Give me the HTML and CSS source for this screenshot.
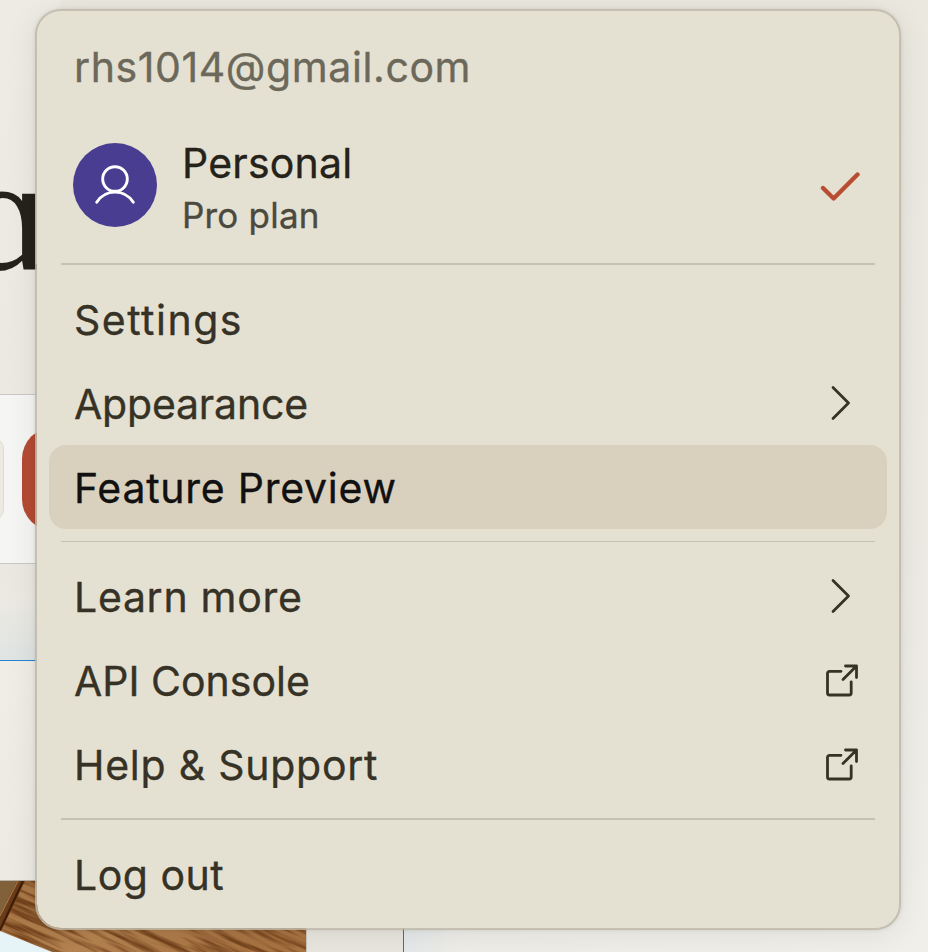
FILE: index.html
```html
<!DOCTYPE html>
<html lang="en">
<head>
<meta charset="utf-8">
<title>Account menu</title>
<link rel="stylesheet" href="styles.css">
</head>
<body>
<div class="page">
  <div class="backdrop" aria-hidden="true">
    <div class="hero"><span class="hero-letter">ɑ</span></div>
    <div class="composer"><span class="pill"></span><span class="send"></span></div>
    <div class="glow"></div>
    <div class="rest"></div>
    <div class="bottom">
      <svg class="photo" viewBox="0 0 306 71" preserveAspectRatio="none">
        <defs>
          <linearGradient id="wood" x1="0" x2="1" y2="0.3"><stop offset="0" stop-color="#a87545"/><stop offset=".5" stop-color="#b58350"/><stop offset="1" stop-color="#a87342"/></linearGradient>
          <filter id="grain" x="0" y="0" width="100%" height="100%" color-interpolation-filters="sRGB"><feTurbulence type="fractalNoise" baseFrequency=".014 .2" numOctaves="3" seed="7"/><feColorMatrix values="0 0 0 0 .45  0 0 0 0 .26  0 0 0 0 .11  3.4 0 0 0 -1.4"/></filter>
          <clipPath id="frame"><rect width="306" height="71"/></clipPath>
        </defs>
        <g clip-path="url(#frame)">
          <rect width="306" height="71" fill="url(#wood)"/>
          <g transform="rotate(24)"><rect x="-60" y="-160" width="460" height="360" filter="url(#grain)"/></g>
          <path d="M0 0H17L0 36Z" fill="#80613a"/>
          <path d="M17 0H25L0 52V34Z" fill="#6b3c18"/>
          <path d="M23 0L0 49" stroke="#3d1c08" stroke-width="2"/>
          <path d="M18 0L0 35" stroke="#b28350" stroke-width="1"/>
          <path d="M0 50L52 71H0Z" fill="#e6f3f7"/>
        </g>
      </svg>
      <div class="gap"></div>
      <div class="panel"></div>
    </div>
  </div>

  <div class="menu" role="menu">
    <div class="email"><span class="t-email">rhs1014@gmail.com</span></div>
    <div class="profile">
      <span class="avatar"><svg viewBox="0 0 84 84"><circle cx="42" cy="36" r="12.300"/><path d="M23.700 59.300A21.500 21.500 0 0 1 60.300 59.300"/></svg></span>
      <span class="who"><span class="name">Personal</span><span class="plan">Pro plan</span></span>
      <svg class="check" viewBox="0 0 40 32"><path d="M3 17L13.600 27.500L37.500 3.500"/></svg>
    </div>
    <div class="sep"></div>
    <div class="item"><span class="t-settings">Settings</span></div>
    <div class="item"><span class="t-appearance">Appearance</span><svg class="chev" viewBox="0 0 20 36"><path d="M2 2.500L17.500 18L2 33.500"/></svg></div>
    <div class="item active"><span class="t-feature">Feature Preview</span></div>
    <div class="sep thin"></div>
    <div class="item"><span class="t-learn">Learn more</span><svg class="chev" viewBox="0 0 20 36"><path d="M2 2.500L17.500 18L2 33.500"/></svg></div>
    <div class="item"><span class="t-api">API Console</span><svg class="ext" viewBox="0 0 34 34"><path d="M16 8.300H4.500A2 2 0 0 0 2.500 10.300V30A2 2 0 0 0 4.500 32H24.200A2 2 0 0 0 26.200 30V18.800M18 16.500L31.500 3M20.500 3H31.500V14.500"/></svg></div>
    <div class="item"><span class="t-help">Help &amp; Support</span><svg class="ext" viewBox="0 0 34 34"><path d="M16 8.300H4.500A2 2 0 0 0 2.500 10.300V30A2 2 0 0 0 4.500 32H24.200A2 2 0 0 0 26.200 30V18.800M18 16.500L31.500 3M20.500 3H31.500V14.500"/></svg></div>
    <div class="sep"></div>
    <div class="item"><span class="t-logout">Log out</span></div>
  </div>
</div>
</body>
</html>
```
FILE: styles.css
```css
* { box-sizing: border-box; }
body { margin: 0; font-family: Inter, sans-serif; }
.page { position: relative; width: 928px; height: 952px; overflow: hidden; background: linear-gradient(#ebe8e0, #edeae4 55%, #f0efea); }

.backdrop { position: absolute; inset: 0; display: flex; flex-direction: column; }
.hero { height: 394px; width: 60px; overflow: hidden; background: linear-gradient(#eeebe5, #ece9e2); }
.hero-letter { display: block; margin: 127px 0 0 -36px; font: 166px/172px "Liberation Serif", serif; color: #25221b; }
.composer { width: 60px; height: 170px; display: flex; align-items: center; gap: 18px; background: #f5f5f3; border: solid #c9c8c4; border-width: 1px 0; overflow: hidden; }
.pill { flex: none; width: 24px; height: 84px; margin-left: -20px; border: 1px solid #dedbd2; border-radius: 20px; background: #edeae2; }
.send { flex: none; width: 100px; height: 104px; border-radius: 32px; background: #b44b33; }
.glow { width: 60px; height: 97px; background: linear-gradient(#ebe8e1, #ebe9e2 40%, #dfe4e3); border-bottom: 1px solid #2484d4; }
.rest { width: 60px; height: 219px; background: linear-gradient(#f0ece6, #eceae3); }
.bottom { display: flex; height: 72px; }
.photo { width: 306px; height: 72px; border-top: 1px solid #b5b2a9; }
.gap { width: 98px; background: #e9e6df; border-left: 1px solid #c7c4bb; border-right: 1px solid #2b78b8; }
.panel { width: 524px; background: linear-gradient(90deg, #e3e8e9, #eeede8 10%, #f0efea); }

.menu { position: relative; width: 866px; height: 921px; margin: 9px 0 0 35px; padding: 12px; border: 2px solid rgba(190,185,168,.85); border-radius: 26px; background: #e5e1d2; background-clip: padding-box; box-shadow: 0 4px 32px rgba(0,0,0,.08), 0 0 4px rgba(0,0,0,.1); color: #363226; font-size: 41px; white-space: nowrap; -webkit-text-stroke: .35px currentColor; }
.email { height: 96px; padding: 3px 25px 0; line-height: 83px; color: #6c685a; }
.profile { height: 132px; padding: 0 27px 0 24px; display: flex; align-items: center; }
.avatar { width: 84px; height: 84px; border-radius: 50%; background: #493d91; }
.avatar svg { display: block; fill: none; stroke: #fff; stroke-width: 2.900; stroke-linecap: round; }
.who { flex: 1; margin: 4px 0 0 25px; display: flex; flex-direction: column; }
.name { height: 56px; line-height: 58px; letter-spacing: .2px; color: #25221a; }
.plan { height: 50px; line-height: 50px; font-size: 35px; letter-spacing: .2px; color: #4c493e; }
.check { width: 40px; height: 32px; margin-top: 3px; fill: none; stroke: #b94d34; stroke-width: 4.400; stroke-linecap: round; stroke-linejoin: round; }
.sep { height: 2px; margin: 12px; background: #c6c2b3; }
.sep.thin { height: 1px; }
.item { height: 84px; padding: 3px 27px 0 25px; border-radius: 17px; display: flex; align-items: center; justify-content: space-between; line-height: 81px; }
.item.active { background: #dad0be; color: #111; }
.t-email { letter-spacing: .6px; }
.t-settings { letter-spacing: 1.5px; }
.t-appearance { letter-spacing: -.2px; }
.t-feature { letter-spacing: .75px; }
.t-learn { letter-spacing: .7px; }
.t-help { letter-spacing: .75px; }
.t-logout { letter-spacing: .5px; }
.chev { width: 20px; height: 36px; margin: -3px 9px 0 0; fill: none; stroke: #363226; stroke-width: 2.800; stroke-linecap: round; stroke-linejoin: round; }
.ext { width: 34px; height: 34px; margin: -4px 1px 0 0; fill: none; stroke: #363226; stroke-width: 2.800; stroke-linecap: round; stroke-linejoin: round; }
```
